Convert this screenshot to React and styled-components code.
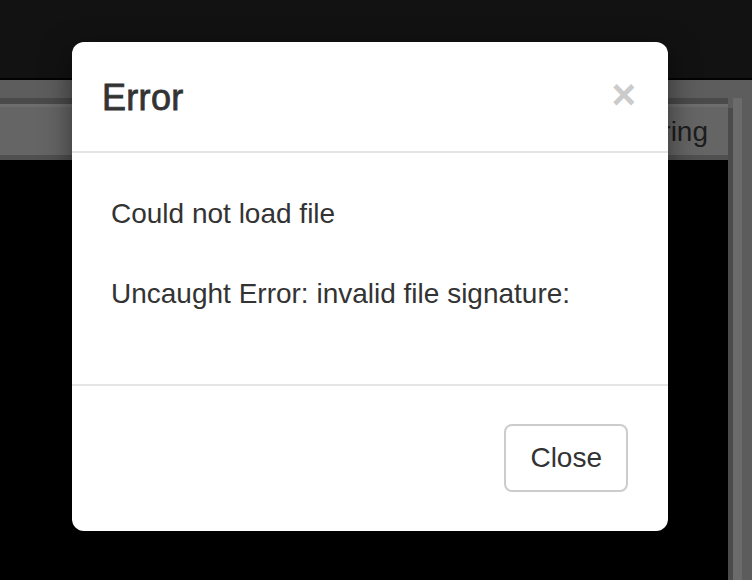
import React from "react";
import styled, { createGlobalStyle } from "styled-components";

const GlobalStyle = createGlobalStyle`
  html, body {
    margin: 0;
    padding: 0;
    width: 752px;
    height: 580px;
    overflow: hidden;
    background: #000;
    font-family: "Liberation Sans", Arial, Helvetica, sans-serif;
  }
`;

const Page = styled.div`
  position: relative;
  width: 752px;
  height: 580px;
  display: flex;
  flex-direction: column;
  background: #000;
`;

const TopBar = styled.div`
  height: 78px;
  background: #121212;
  border-bottom: 2px solid #030303;
`;

const ToolStrip = styled.div`
  height: 18px;
  background: #5d5d5d;
`;

const Workspace = styled.div`
  flex: 1;
  display: flex;
  background: #000;
`;

const MainColumn = styled.div`
  flex: 1;
  display: flex;
  flex-direction: column;
`;

const TabGutter = styled.div`
  height: 6px;
  background: #4a4a4a;
`;

const TabBar = styled.div`
  height: 48px;
  background: #656565;
  border-top: 3px solid #6d6d6d;
  border-bottom: 5px solid #505050;
  display: flex;
  align-items: center;
  justify-content: flex-end;
  padding-right: 20px;
`;

const TabLabel = styled.span`
  font-size: 28px;
  color: #1d1d1d;
  line-height: 40px;
  margin-top: 2px;
`;

const Canvas = styled.div`
  flex: 1;
  background: #000;
`;

const SideFrame = styled.div`
  width: 24px;
  display: flex;
  background: #5c5c5c;
`;

const FrameStrip = styled.div`
  width: ${({ $w }) => $w}px;
  background: ${({ $c }) => $c};
  border-top: ${({ $top }) => $top || 0}px solid #5c5c5c;
`;

const Modal = styled.div`
  position: absolute;
  left: 72px;
  top: 42px;
  width: 596px;
  background: #fff;
  border-radius: 12px;
  box-shadow: 0 10px 30px rgba(0, 0, 0, 0.5);
  display: flex;
  flex-direction: column;
  color: #333;
`;

const Header = styled.div`
  display: flex;
  align-items: flex-start;
  justify-content: space-between;
  padding: 30px 32px 28px 30px;
  border-bottom: 2px solid #e5e5e5;
`;

const Title = styled.h4`
  margin: 0;
  font-size: 36px;
  line-height: 51px;
  font-weight: 500;
  color: #333;
  -webkit-text-stroke: 0.8px #333;
  letter-spacing: 0.3px;
`;

const CloseX = styled.button`
  background: none;
  border: 0;
  padding: 0;
  margin-top: 2px;
  font-family: "Liberation Sans", Arial, sans-serif;
  font-size: 42px;
  font-weight: bold;
  line-height: 42px;
  color: #cbcbcb;
  cursor: pointer;
`;

const Body = styled.div`
  padding: 41px 39px 30px;
`;

const Message = styled.p`
  margin: 0 0 40px;
  font-size: 28px;
  line-height: 40px;
`;

const Footer = styled.div`
  display: flex;
  justify-content: flex-end;
  padding: 38px 40px 39px;
  border-top: 2px solid #e5e5e5;
`;

const Button = styled.button`
  height: 68px;
  padding: 0 24px;
  border: 2px solid #cccccc;
  border-radius: 8px;
  background: #fff;
  color: #333;
  font-family: "Liberation Sans", Arial, sans-serif;
  font-size: 28px;
  line-height: 40px;
  cursor: pointer;
`;

export default function App() {
  return (
    <>
      <GlobalStyle />
      <Page>
        <TopBar />
        <ToolStrip />
        <Workspace>
          <MainColumn>
            <TabGutter />
            <TabBar>
              <TabLabel>Rendering</TabLabel>
            </TabBar>
            <Canvas />
          </MainColumn>
          <SideFrame>
            <FrameStrip $w={5} $c="#4b4b4b" $top={10} />
            <FrameStrip $w={9} $c="#6b6b6b" />
            <FrameStrip $w={10} $c="#5c5c5c" />
          </SideFrame>
        </Workspace>

        <Modal role="dialog">
          <Header>
            <Title>Error</Title>
            <CloseX aria-label="Close">×</CloseX>
          </Header>
          <Body>
            <Message>Could not load file</Message>
            <Message>Uncaught Error: invalid file signature:</Message>
          </Body>
          <Footer>
            <Button>Close</Button>
          </Footer>
        </Modal>
      </Page>
    </>
  );
}
